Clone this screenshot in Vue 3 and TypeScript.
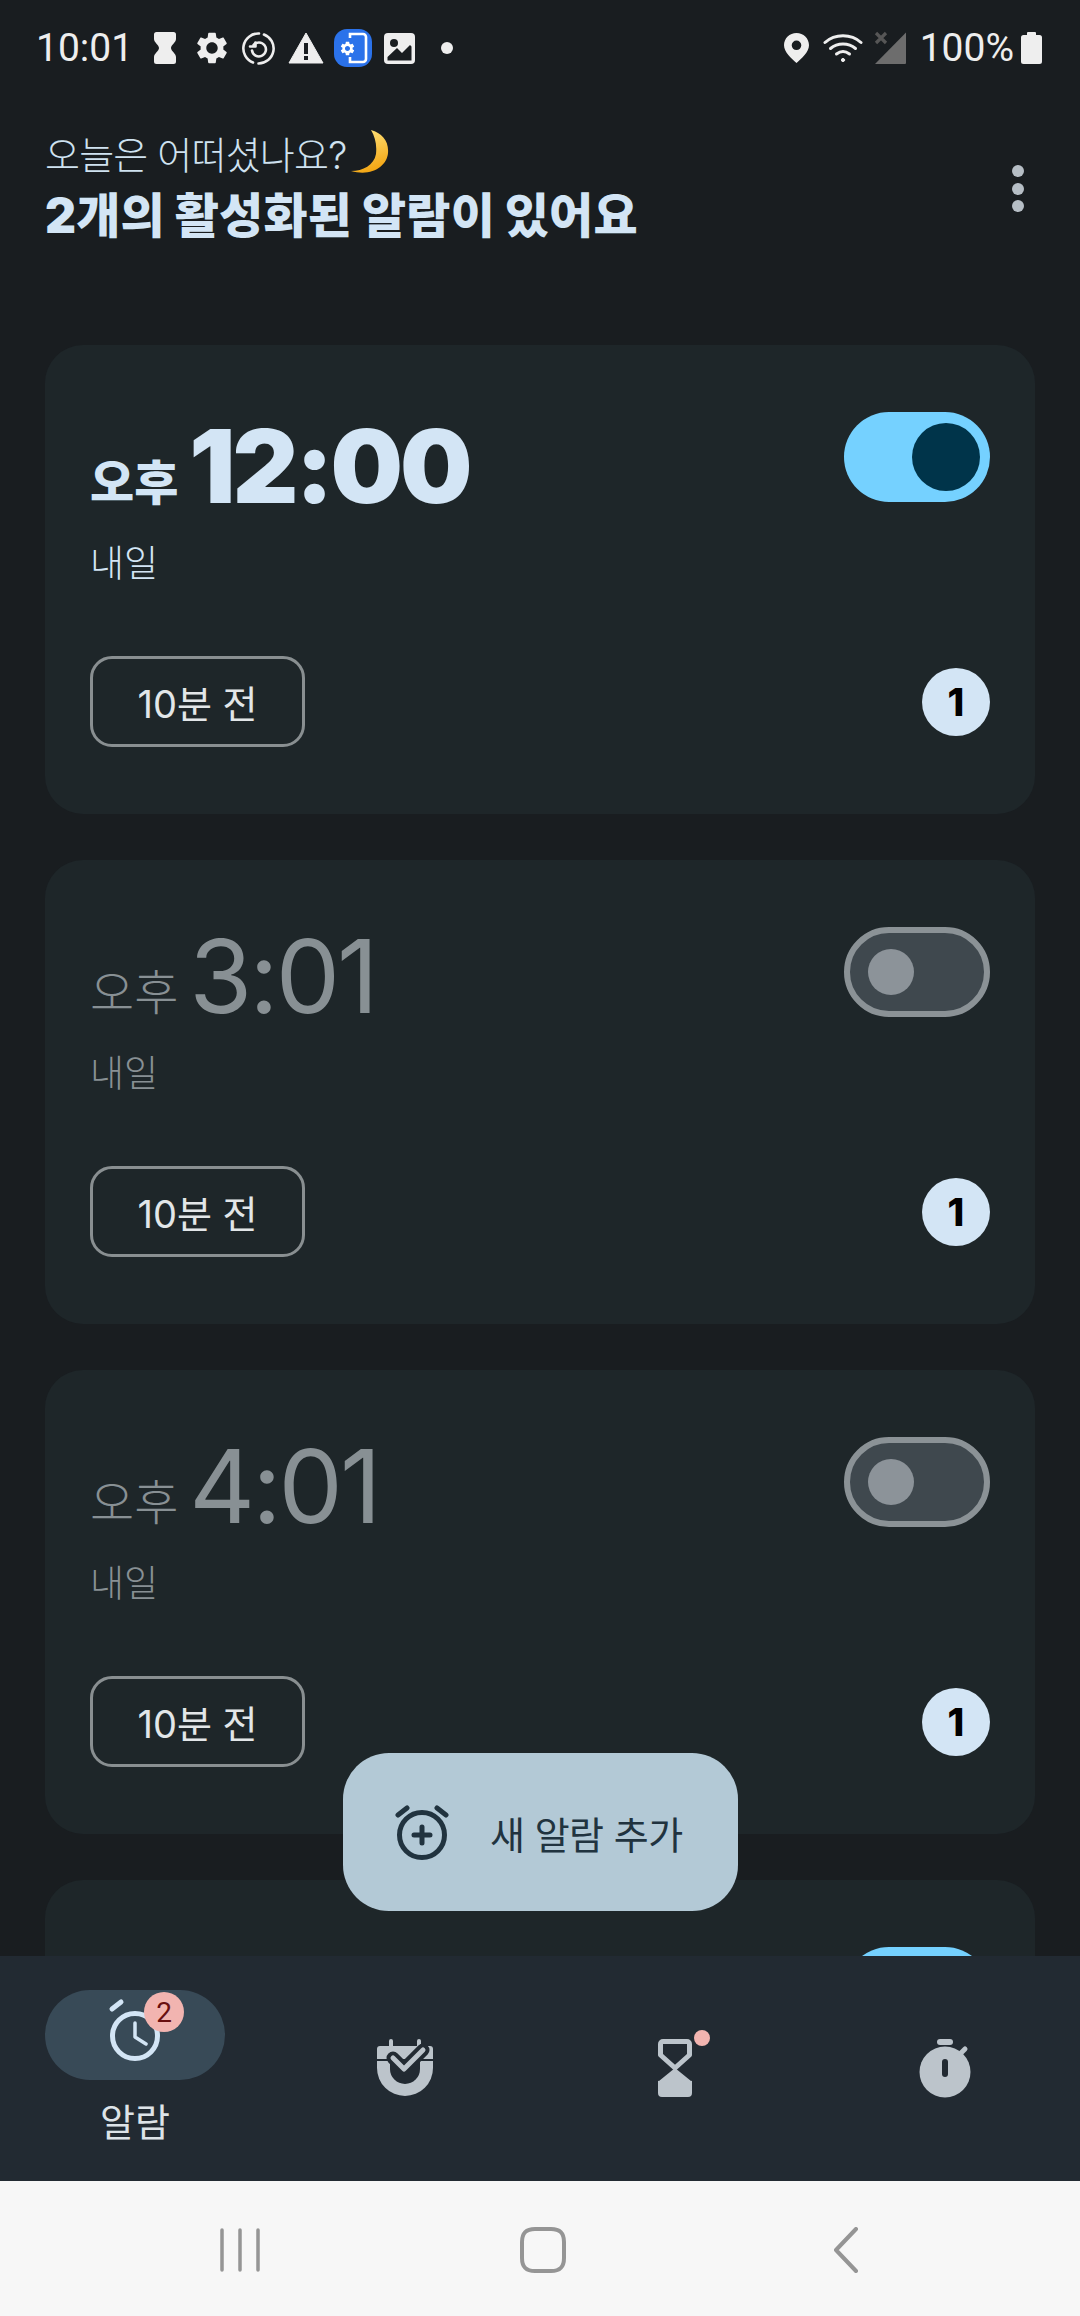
<script setup lang="ts">
interface Alarm {
  id: number
  time: string
  on: boolean
}

const alarms: Alarm[] = [
  { id: 1, time: '12:00', on: true },
  { id: 2, time: '3:01', on: false },
  { id: 3, time: '4:01', on: false },
]
</script>

<template>
  <div class="screen">
    <main class="content">
      <div class="status">
        <span class="clock">10:01</span>
        <div class="status-icons">
          <span class="cell">
            <svg width="22" height="32" viewBox="0 0 22 32"><path d="M2.500 0h17A2.500 2.500 0 0 1 22 2.500V7c0 3.500-5 6-5 9s5 5.500 5 9v4.500a2.500 2.500 0 0 1-2.500 2.500h-17A2.500 2.500 0 0 1 0 29.500V25c0-3.500 5-6 5-9S0 10.500 0 7V2.500A2.500 2.500 0 0 1 2.500 0z" fill="#eee" /></svg>
          </span>
          <span class="cell">
            <svg width="38" height="38" viewBox="0 0 24 24"><path d="M19.14 12.94c.04-.3.06-.61.06-.94 0-.32-.02-.64-.07-.94l2.03-1.58c.18-.14.23-.41.12-.61l-1.92-3.32c-.12-.22-.37-.29-.59-.22l-2.39.96c-.5-.38-1.03-.7-1.62-.94l-.36-2.54c-.04-.24-.24-.41-.48-.41h-3.84c-.24 0-.43.17-.47.41l-.36 2.54c-.59.24-1.13.57-1.62.94l-2.39-.96c-.22-.08-.47 0-.59.22L2.74 8.87c-.12.21-.08.47.12.61l2.03 1.58c-.05.3-.09.63-.09.94s.02.64.07.94l-2.03 1.58c-.18.14-.23.41-.12.61l1.92 3.32c.12.22.37.29.59.22l2.39-.96c.5.38 1.03.7 1.62.94l.36 2.54c.05.24.24.41.48.41h3.84c.24 0 .44-.17.47-.41l.36-2.54c.59-.24 1.13-.56 1.62-.94l2.39.96c.22.08.47 0 .59-.22l1.92-3.32c.12-.22.07-.47-.12-.61l-2.01-1.58zM12 15.6c-1.98 0-3.6-1.62-3.6-3.6s1.62-3.6 3.6-3.6 3.6 1.62 3.6 3.6-1.62 3.6-3.6 3.6z" fill="#eee" /></svg>
          </span>
          <span class="cell">
            <svg width="33" height="33" viewBox="0 0 33 33" fill="none" stroke="#eee" stroke-width="2.6" stroke-linecap="round">
              <path d="M22 2.500A15 15 0 0 1 16.500 31.500" />
              <path d="M11 30.500A15 15 0 0 1 17 1.500" />
              <path d="M11.500 13A7 7 0 1 1 10 18.500" />
              <path d="M8 14.500h5.500v-4" stroke-linejoin="round" />
            </svg>
          </span>
          <span class="cell">
            <svg width="36" height="32" viewBox="0 0 36 32"><path d="M18 1 35 31H1z" fill="#eee" stroke="#eee" stroke-linejoin="round" /><rect x="16" y="11" width="4" height="11" fill="#191d20" /><rect x="16" y="24" width="4" height="4" fill="#191d20" /></svg>
          </span>
          <span class="cell">
            <svg width="38" height="38" viewBox="0 0 38 38">
              <rect width="38" height="38" rx="13" fill="#2b72ea" />
              <path d="M16 9V5h13a3 3 0 0 1 3 3v22a3 3 0 0 1-3 3H16v-5" fill="none" stroke="#fff" stroke-width="2.6" />
              <svg x="5" y="11" width="17" height="17" viewBox="0 0 24 24"><path d="M19.14 12.94c.04-.3.06-.61.06-.94 0-.32-.02-.64-.07-.94l2.03-1.58c.18-.14.23-.41.12-.61l-1.92-3.32c-.12-.22-.37-.29-.59-.22l-2.39.96c-.5-.38-1.03-.7-1.62-.94l-.36-2.54c-.04-.24-.24-.41-.48-.41h-3.84c-.24 0-.43.17-.47.41l-.36 2.54c-.59.24-1.13.57-1.62.94l-2.39-.96c-.22-.08-.47 0-.59.22L2.74 8.87c-.12.21-.08.47.12.61l2.03 1.58c-.05.3-.09.63-.09.94s.02.64.07.94l-2.03 1.58c-.18.14-.23.41-.12.61l1.92 3.32c.12.22.37.29.59.22l2.39-.96c.5.38 1.03.7 1.62.94l.36 2.54c.05.24.24.41.48.41h3.84c.24 0 .44-.17.47-.41l.36-2.54c.59-.24 1.13-.56 1.62-.94l2.39.96c.22.08.47 0 .59-.22l1.92-3.32c.12-.22.07-.47-.12-.61l-2.01-1.58zM12 15.6c-1.98 0-3.6-1.62-3.6-3.6s1.62-3.6 3.6-3.6 3.6 1.62 3.6 3.6-1.62 3.6-3.6 3.6z" fill="#fff" /></svg>
            </svg>
          </span>
          <span class="cell">
            <svg width="31" height="31" viewBox="0 0 31 31">
              <rect width="31" height="31" rx="4" fill="#eee" />
              <circle cx="10" cy="10" r="4" fill="#191d20" />
              <path d="M3.500 27.500V24L13 15l5 5 8-8 1.500 1.500v14z" fill="#191d20" />
            </svg>
          </span>
          <span class="cell">
            <span class="status-dot"></span>
          </span>
        </div>
        <div class="status-right">
          <span class="cell">
            <svg width="25" height="30" viewBox="0 0 25 30"><path fill-rule="evenodd" d="M12.500 0C19.400 0 25 5.400 25 12.200 25 19 17.500 25.500 12.500 30 7.500 25.500 0 19 0 12.200 0 5.400 5.600 0 12.500 0zm0 7.500a4.800 4.800 0 1 0 0 9.600 4.800 4.800 0 0 0 0-9.600z" fill="#eee" /></svg>
          </span>
          <span class="cell">
            <svg width="40" height="29" viewBox="0 0 40 29" fill="none" stroke="#eee" stroke-width="3" stroke-linecap="round"><path d="M2 8.500C12 -.500 28 -.500 38 8.500" /><path d="M7.500 14.500C14.500 8.500 25.500 8.500 32.500 14.500" /><path d="M13.500 20c4-3 9-3 13 0" /><circle cx="20" cy="26" r="1.600" fill="#eee" stroke-width="1" /></svg>
          </span>
          <span class="cell">
            <svg width="33" height="34" viewBox="0 0 33 34"><path d="M32 1.500V32a1 1 0 0 1-1 1H1z" fill="#6d6d6d" /><path d="M2 2l10 10M12 2 2 12" stroke="#565656" stroke-width="3.2" /></svg>
          </span>
          <span class="battery-text">100%</span>
          <svg class="battery" width="21" height="32" viewBox="0 0 21 32"><path d="M7 0h7a1 1 0 0 1 1 1v2h3.500A2.500 2.500 0 0 1 21 5.500v24a2.500 2.500 0 0 1-2.500 2.500h-16A2.500 2.500 0 0 1 0 29.500v-24A2.500 2.500 0 0 1 2.500 3H6V1a1 1 0 0 1 1-1z" fill="#eee" /></svg>
        </div>
      </div>

      <header class="header">
        <div>
          <p class="greeting">
            오늘은 어떠셨나요?
            <svg class="moon" width="40" height="46" viewBox="0 0 40 44">
              <defs>
                <linearGradient id="moon-fill" x1="0.3" y1="0" x2="0.6" y2="1">
                  <stop offset="0" stop-color="#ffe27a" />
                  <stop offset="1" stop-color="#f2a30f" />
                </linearGradient>
              </defs>
              <path d="M21 0C32 3 39 11 38 23 37 36 22 47 1 41c12 0 23-6 25-17C27 14 25 7 21 0z" fill="url(#moon-fill)" />
            </svg>
          </p>
          <h1 class="title">2개의 활성화된 알람이 있어요</h1>
        </div>
        <div class="kebab">
          <span></span>
          <span></span>
          <span></span>
        </div>
      </header>

      <section class="list">
        <article v-for="alarm in alarms" :key="alarm.id" class="card" :class="{ active: alarm.on }">
          <div class="card-top">
            <div>
              <div class="time-row">
                <span class="ampm">오후</span>
                <span class="time">{{ alarm.time }}</span>
              </div>
              <div class="day">내일</div>
            </div>
            <span class="toggle"><span class="knob"></span></span>
          </div>
          <div class="card-bottom">
            <span class="chip">10분 전</span>
            <span class="count">1</span>
          </div>
        </article>
        <!-- only the top of the next card shows above the tabs -->
        <article class="card active peek">
          <div class="card-top">
            <span></span>
            <span class="toggle"><span class="knob"></span></span>
          </div>
        </article>
      </section>
    </main>

    <button class="fab">
      <svg width="54" height="56" viewBox="0 0 54 56" fill="none" stroke="#21333f" stroke-linecap="round">
        <circle cx="27" cy="31" r="22.500" stroke-width="5" />
        <path d="M3 11 12 4M51 11 42 4" stroke-width="5" />
        <path d="M27 23v16M19 31h16" stroke-width="5" />
      </svg>
      <span>새 알람 추가</span>
    </button>

    <nav class="tabs">
      <div class="tab">
        <div class="pill">
          <svg width="56" height="66" viewBox="0 0 56 66" fill="none" stroke="#d3e5f5" stroke-linecap="round">
            <circle cx="28" cy="38" r="22.500" stroke-width="5" />
            <path d="M5 11 14 4" stroke-width="5" />
            <path d="M28 25v14l11 7" stroke-width="3.500" stroke-linejoin="round" />
          </svg>
          <span class="tab-badge">2</span>
        </div>
        <span class="tab-label">알람</span>
      </div>
      <div class="tab">
        <svg width="56" height="58" viewBox="0 0 56 58">
          <path d="M3 7h50a3 3 0 0 1 3 3v19a28 28 0 0 1-56 0V10a3 3 0 0 1 3-3z" fill="#bcc4cb" />
          <rect x="12" y="0" width="4" height="9" rx="2" fill="#bcc4cb" />
          <rect x="40" y="0" width="4" height="9" rx="2" fill="#bcc4cb" />
          <rect x="0" y="20" width="56" height="2" fill="#222a32" />
          <path d="M13 21v9a15 15 0 0 0 30 0v-9z" fill="#222a32" />
          <path d="M16 19 27 30 46 11" fill="none" stroke="#222a32" stroke-width="13" stroke-linejoin="round" stroke-linecap="round" />
          <path d="M16 19 27 30 46 11" fill="none" stroke="#bcc4cb" stroke-width="5" stroke-linejoin="round" stroke-linecap="round" />
        </svg>
      </div>
      <div class="tab">
        <div class="timer">
          <svg width="34" height="58" viewBox="0 0 34 58">
            <path d="M5 2.500h24A2.500 2.500 0 0 1 31.500 5v11L17 29 2.500 16V5A2.500 2.500 0 0 1 5 2.500z" fill="none" stroke="#bcc4cb" stroke-width="5" stroke-linejoin="round" />
            <path d="M17 29 33 42a1 1 0 0 1 1 2v10a4 4 0 0 1-4 4H4a4 4 0 0 1-4-4V44a1 1 0 0 1 1-2z" fill="#bcc4cb" />
          </svg>
          <span class="timer-dot"></span>
        </div>
      </div>
      <div class="tab">
        <svg width="52" height="60" viewBox="0 0 52 60">
          <rect x="18" y="0" width="16" height="6" rx="3" fill="#bcc4cb" />
          <circle cx="26" cy="33" r="25.500" fill="#bcc4cb" />
          <path d="M42 14l4-4" stroke="#bcc4cb" stroke-width="5" stroke-linecap="round" />
          <rect x="23" y="20" width="6" height="18" rx="3" fill="#222a32" />
        </svg>
      </div>
    </nav>

    <footer class="sysbar">
      <svg width="44" height="46" viewBox="0 0 44 46" stroke="#959595" stroke-width="3.5" stroke-linecap="round"><path d="M4 3v40M22 3v40M40 3v40" /></svg>
      <svg width="46" height="46" viewBox="0 0 46 46" fill="none" stroke="#959595" stroke-width="4"><path d="M15 2h16c9 0 13 4 13 13v16c0 9-4 13-13 13H15C6 44 2 40 2 31V15C2 6 6 2 15 2z" /></svg>
      <svg width="26" height="46" viewBox="0 0 26 46" fill="none" stroke="#959595" stroke-width="4" stroke-linecap="round" stroke-linejoin="round"><path d="M23 2 3 23l20 21" /></svg>
    </footer>
  </div>
</template>

<style>
html,
body {
  margin: 0;
  background: #191d20;
}
</style>

<style scoped>
.screen {
  position: relative;
  width: 1080px;
  height: 2316px;
  display: flex;
  flex-direction: column;
  overflow: hidden;
  background: #191d20;
  font-family: Inter, "Noto Sans CJK KR", sans-serif;
}

.content {
  flex: 1;
  min-height: 0;
  overflow: hidden;
}

.status {
  height: 96px;
  display: flex;
  align-items: center;
  padding: 0 38px 0 36px;
  color: #eee;
  font-family: Roboto, sans-serif;
  font-size: 39px;
}

.clock {
  width: 105px;
}

.status-icons,
.status-right {
  display: flex;
  align-items: center;
}

.status-right {
  margin-left: auto;
}

.cell {
  width: 47px;
  height: 46px;
  display: flex;
  align-items: center;
  justify-content: center;
}

.status-dot {
  width: 12px;
  height: 12px;
  border-radius: 50%;
  background: #eee;
}

.battery-text {
  margin-left: 6px;
}

.battery {
  margin-left: 7px;
}

.header {
  display: flex;
  justify-content: space-between;
  align-items: flex-start;
  padding: 31px 56px 0 45px;
  height: 219px;
  box-sizing: border-box;
}

.greeting {
  margin: 0;
  display: flex;
  align-items: center;
  gap: 4px;
  height: 50px;
  color: #cfe2f0;
  font-size: 38px;
  font-weight: 300;
  letter-spacing: -0.8px;
}

.title {
  margin: 9px 0 0;
  color: #d3e5f5;
  font-size: 48px;
  font-weight: 900;
  line-height: 60px;
  letter-spacing: 0.2px;
}

.kebab {
  display: flex;
  flex-direction: column;
  gap: 5.5px;
  margin-top: 38px;
}

.kebab span {
  width: 12px;
  height: 12px;
  border-radius: 50%;
  background: #b6bec5;
}

.list {
  display: flex;
  flex-direction: column;
  gap: 46px;
  padding: 30px 45px 0;
}

.card {
  flex: none;
  padding: 67px 45px;
  border-radius: 38px;
  background: #1e2629;
}

.card-top {
  display: flex;
  justify-content: space-between;
  align-items: flex-start;
}

.time-row {
  height: 99px;
  line-height: 99px;
  color: #889094;
  white-space: nowrap;
}

.ampm {
  margin-right: 11px;
  font-size: 48px;
  font-weight: 300;
  line-height: 1;
  vertical-align: 3px;
}

.time {
  font-size: 102px;
  font-weight: 400;
  letter-spacing: -3px;
}

.active .time-row {
  height: 109px;
  line-height: 109px;
  color: #d3e5f5;
}

.active .ampm {
  font-weight: 800;
}

.active .time {
  font-weight: 900;
}

.day {
  margin-top: 23px;
  color: #889094;
  font-size: 37px;
  font-weight: 300;
  line-height: 50px;
}

.active .day {
  margin-top: 18px;
  color: #d3e5f5;
}

.toggle {
  box-sizing: border-box;
  width: 146px;
  height: 90px;
  display: flex;
  align-items: center;
  padding-left: 18px;
  border: 6px solid #8b9296;
  border-radius: 45px;
  background: #3f484e;
}

.knob {
  width: 46px;
  height: 46px;
  border-radius: 50%;
  background: #8c9399;
}

.active .toggle {
  padding: 0 10px 0 0;
  justify-content: flex-end;
  border: 0;
  background: #75d1ff;
}

.active .knob {
  width: 68px;
  height: 68px;
  background: #00344a;
}

.card-bottom {
  display: flex;
  justify-content: space-between;
  align-items: center;
  margin-top: 67px;
}

.chip {
  box-sizing: border-box;
  width: 215px;
  height: 91px;
  display: flex;
  align-items: center;
  justify-content: center;
  border: 3px solid #898f91;
  border-radius: 22px;
  color: #e2e6e8;
  font-size: 38px;
  font-weight: 400;
}

.count {
  width: 68px;
  height: 68px;
  display: flex;
  align-items: center;
  justify-content: center;
  border-radius: 50%;
  background: #d3e5f5;
  color: #000;
  font-size: 38px;
  font-weight: 800;
}

.fab {
  position: absolute;
  left: 343px;
  top: 1753px;
  width: 395px;
  height: 158px;
  display: flex;
  align-items: center;
  gap: 41px;
  padding: 0 0 0 52px;
  border: 0;
  border-radius: 46px;
  background: #b3c9d6;
  color: #21333f;
  font-family: inherit;
  font-size: 38px;
  font-weight: 400;
  letter-spacing: -0.5px;
}

.tabs {
  flex: none;
  height: 225px;
  display: grid;
  grid-template-columns: repeat(4, 270px);
  background: #222a32;
}

.tab {
  display: flex;
  flex-direction: column;
  align-items: center;
  padding-top: 83px;
}

.tab:first-child {
  padding-top: 34px;
}

.pill {
  position: relative;
  width: 180px;
  height: 90px;
  display: flex;
  align-items: flex-end;
  justify-content: center;
  padding-bottom: 16px;
  box-sizing: border-box;
  border-radius: 45px;
  background: #384a57;
}

.tab-badge {
  position: absolute;
  left: 99px;
  top: 2px;
  width: 40px;
  height: 40px;
  display: flex;
  align-items: center;
  justify-content: center;
  border-radius: 50%;
  background: #f2b4b0;
  color: #690f10;
  font-family: Roboto, sans-serif;
  font-size: 28px;
}

.tab-label {
  margin-top: 17px;
  color: #dde3e8;
  font-size: 38px;
  font-weight: 400;
  line-height: 50px;
}

.timer {
  position: relative;
  display: flex;
}

.timer-dot {
  position: absolute;
  left: 36px;
  top: -9px;
  width: 16px;
  height: 16px;
  border-radius: 50%;
  background: #f2b4b0;
}

.sysbar {
  flex: none;
  height: 135px;
  box-sizing: border-box;
  display: grid;
  grid-template-columns: repeat(3, 303px);
  padding: 2px 0 0 88px;
  align-items: center;
  justify-items: center;
  background: #f7f7f7;
}
</style>
